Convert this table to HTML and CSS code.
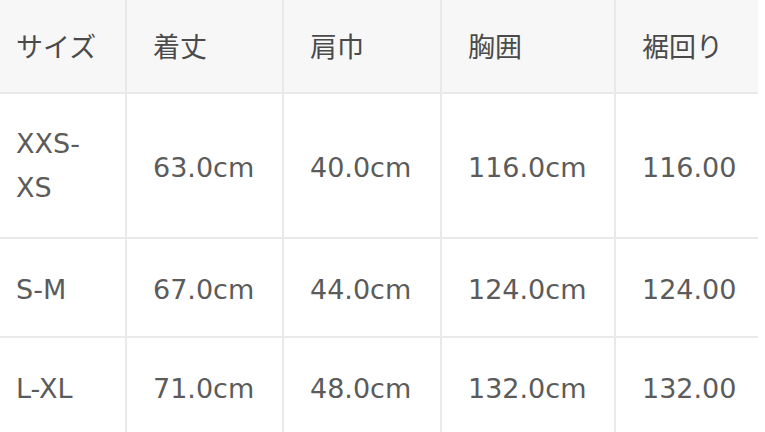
FILE: index.html
```html
<!DOCTYPE html>
<html lang="ja">
<head>
<meta charset="utf-8">
<link rel="stylesheet" href="styles.css">
</head>
<body>
<table class="size-table">
  <colgroup>
    <col class="c1"><col class="c2"><col class="c3"><col class="c4"><col class="c5">
  </colgroup>
  <thead>
    <tr class="head">
      <th>サイズ</th><th>着丈</th><th>肩巾</th><th>胸囲</th><th>裾回り</th>
    </tr>
  </thead>
  <tbody>
    <tr class="r1">
      <td>XXS-<br>XS</td><td>63.0cm</td><td>40.0cm</td><td>116.0cm</td><td>116.00</td>
    </tr>
    <tr class="rn">
      <td>S-M</td><td>67.0cm</td><td>44.0cm</td><td>124.0cm</td><td>124.00</td>
    </tr>
    <tr class="rn">
      <td>L-XL</td><td>71.0cm</td><td>48.0cm</td><td>132.0cm</td><td>132.00</td>
    </tr>
  </tbody>
</table>
</body>
</html>
```

FILE: styles.css
```css
html, body {
  margin: 0;
  padding: 0;
  background: #ffffff;
}

.size-table {
  border-collapse: collapse;
  table-layout: fixed;
  width: 758px;
  font-family: "DejaVu Sans", "Noto Sans CJK JP", sans-serif;
  font-size: 27px;
  line-height: 44px;
  color: #5b5b5b;
}

.c1 { width: 126px; }
.c2 { width: 157px; }
.c3 { width: 158px; }
.c4 { width: 174px; }
.c5 { width: 143px; }

.size-table th,
.size-table td {
  border: 2px solid #e9e9e9;
  text-align: left;
  padding-left: 26px;
  padding-right: 0;
  white-space: nowrap;
  vertical-align: top;
}

.size-table th {
  font-weight: normal;
  background: #f7f7f7;
  color: #4a4a4a;
  padding-top: 24px;
  padding-bottom: 24px;
  border-top: none;
  font-family: "Noto Sans CJK JP", sans-serif;
}

.size-table tr > :first-child {
  border-left: none;
  padding-left: 16px;
}

.size-table tr > :last-child {
  border-right: none;
}

.r1 td {
  padding-top: 28px;
  padding-bottom: 27px;
}

.r1 td:not(:first-child) {
  vertical-align: middle;
  padding-top: 30px;
  padding-bottom: 25px;
}

.rn td {
  padding-top: 29px;
  padding-bottom: 24px;
}
```
